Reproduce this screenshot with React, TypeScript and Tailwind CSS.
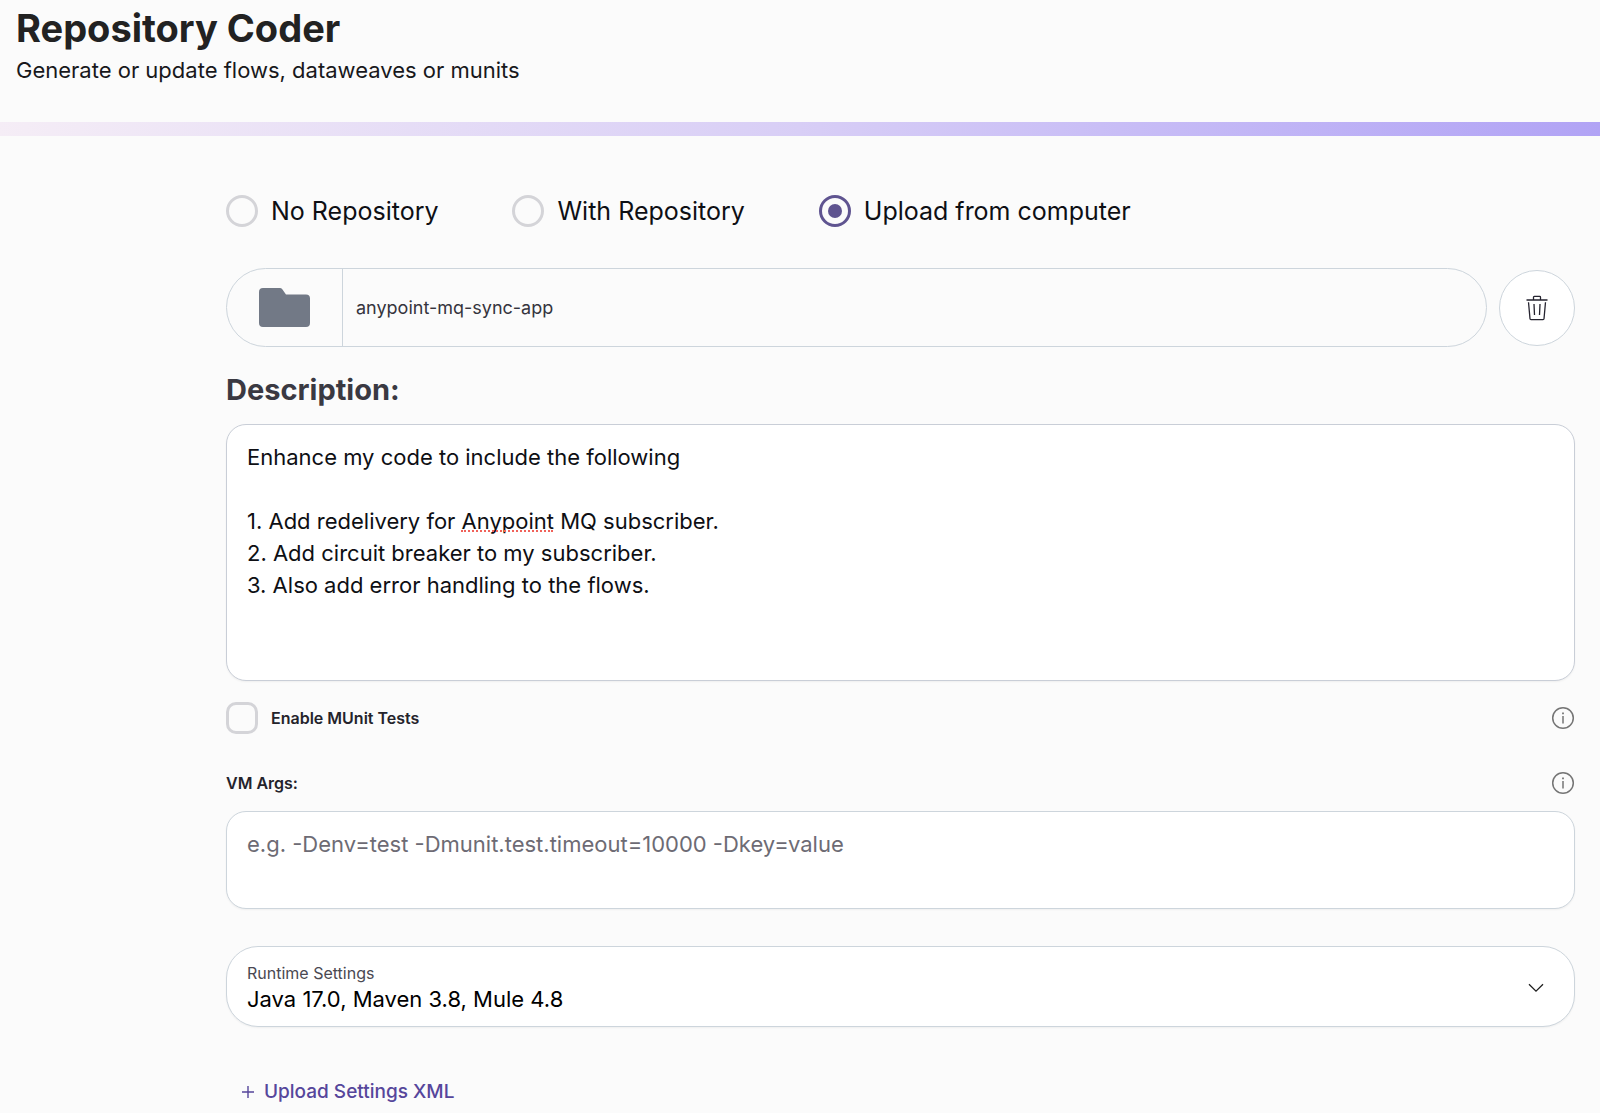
import { useState } from 'react';

const SOURCES = [
  { id: 'none', label: 'No Repository' },
  { id: 'repo', label: 'With Repository' },
  { id: 'upload', label: 'Upload from computer' },
];

const RUNTIMES = ['Java 17.0, Maven 3.8, Mule 4.8', 'Java 8.0, Maven 3.8, Mule 4.4'];

const DEFAULT_DESCRIPTION = `Enhance my code to include the following

1. Add redelivery for Anypoint MQ subscriber.
2. Add circuit breaker to my subscriber.
3. Also add error handling to the flows.`;

function FolderIcon() {
  return (
    <svg className="w-[51px] h-[39px]" viewBox="0 0 51 39" fill="#727986" aria-hidden="true">
      <path d="M4 0h17a3 3 0 0 1 2.1.9L27 6.5h20a4 4 0 0 1 4 4V35a4 4 0 0 1-4 4H4a4 4 0 0 1-4-4V4a4 4 0 0 1 4-4z" />
    </svg>
  );
}

function TrashIcon() {
  return (
    <svg className="w-[22px] h-[26px]" viewBox="0 0 22 26" fill="none" stroke="#25232f" strokeWidth="1.3" aria-hidden="true">
      <path d="M.5 5h21M7.5 5V2.2a.8.8 0 0 1 .8-.8h5.4a.8.8 0 0 1 .8.8V5" />
      <path d="M2.5 7.2 4 23.7a1 1 0 0 0 1 .9h12a1 1 0 0 0 1-.9l1.5-16.5" />
      <path d="m8 9 .5 11M14 9l-.5 11" />
    </svg>
  );
}

function InfoButton({ label }: { label: string }) {
  return (
    <button type="button" aria-label={label} className="shrink-0">
      <svg className="size-6 block" viewBox="0 0 24 24" fill="none" stroke="#757575" aria-hidden="true">
        <circle cx="12" cy="12" r="10.3" strokeWidth="1.5" />
        <path d="M12 10v7.5" strokeWidth="1.5" />
        <path d="M12 6.5v1.8" strokeWidth="1.8" />
      </svg>
    </button>
  );
}

export default function App() {
  const [source, setSource] = useState('upload');
  const [description, setDescription] = useState(DEFAULT_DESCRIPTION);
  const [munit, setMunit] = useState(false);
  const [vmArgs, setVmArgs] = useState('');
  const [runtime, setRuntime] = useState(RUNTIMES[0]);

  return (
    <div className="min-h-screen bg-[#fbfbfb] font-[Inter,sans-serif] text-[#0e0f14]">
      <header className="h-[122px] px-4 pt-1">
        <h1 className="text-[38px] leading-12 font-bold text-[#222222]">Repository Coder</h1>
        <p className="text-[22px] leading-9 text-[#18181b]">Generate or update flows, dataweaves or munits</p>
      </header>
      <div className="h-3.5 bg-linear-to-r from-[#f5edf6] via-[#d8cef6] to-[#b1a3f5]" />

      <form className="pl-[226px] pr-[25px] pt-[59px]" onSubmit={(e) => e.preventDefault()}>
        <div role="radiogroup" aria-label="Source" className="flex items-center gap-[74px]">
          {SOURCES.map((item) => (
            <label key={item.id} className="flex items-center gap-[13px] text-[25px] leading-8">
              <input
                type="radio"
                name="source"
                checked={source === item.id}
                onChange={() => setSource(item.id)}
                className="appearance-none size-8 shrink-0 grid place-content-center rounded-full border-3 border-[#d4d4d8] checked:border-[#5f5490] checked:before:size-3.5 checked:before:rounded-full checked:before:bg-[#5f5490]"
              />
              {item.label}
            </label>
          ))}
        </div>

        <div className="flex items-center gap-3 mt-[41px]">
          <div className="flex-1 flex h-[79px] rounded-full border border-[#cdd5dc] overflow-hidden">
            <button
              type="button"
              aria-label="Choose folder"
              className="w-[116px] flex items-center justify-center border-r border-[#cdd5dc]"
            >
              <FolderIcon />
            </button>
            <span className="flex items-center px-[13px] text-lg text-[#35343d]">anypoint-mq-sync-app</span>
          </div>
          <button
            type="button"
            aria-label="Remove folder"
            className="size-[76px] flex items-center justify-center rounded-full border border-[#cdd5dc] bg-white"
          >
            <TrashIcon />
          </button>
        </div>

        <label htmlFor="description" className="block mt-[25px] text-[29px] leading-9 font-bold text-[#3a3942]">
          Description:
        </label>
        <div className="relative mt-4">
          <textarea
            id="description"
            value={description}
            spellCheck={false}
            onChange={(e) => setDescription(e.target.value)}
            className="block w-full h-[257px] resize-none rounded-[20px] border border-[#c9ced7] bg-white px-5 py-4 text-[22px] leading-8 shadow-xs outline-none"
          />
          {description === DEFAULT_DESCRIPTION && (
            <span
              aria-hidden="true"
              className="absolute left-[235px] top-[106px] w-[92px] border-b-2 border-dotted border-[#f0625a] pointer-events-none"
            />
          )}
        </div>

        <div className="flex items-center justify-between mt-[21px]">
          <label className="flex items-center gap-[13px] text-base font-semibold text-[#24232b]">
            <input
              type="checkbox"
              checked={munit}
              onChange={(e) => setMunit(e.target.checked)}
              className="appearance-none size-8 rounded-[10px] border-3 border-[#d4d4d8] checked:bg-[#5f5490] checked:border-[#5f5490]"
            />
            Enable MUnit Tests
          </label>
          <InfoButton label="About MUnit tests" />
        </div>

        <div className="flex items-center justify-between mt-[37px]">
          <label htmlFor="vm-args" className="text-base font-semibold text-[#24232b]">
            VM Args:
          </label>
          <InfoButton label="About VM args" />
        </div>
        <textarea
          id="vm-args"
          value={vmArgs}
          onChange={(e) => setVmArgs(e.target.value)}
          placeholder="e.g. -Denv=test -Dmunit.test.timeout=10000 -Dkey=value"
          className="block w-full h-[98px] mt-4 resize-none rounded-[20px] border border-[#cdd5dc] bg-white px-5 py-4 text-[22px] leading-8 shadow-xs outline-none placeholder:text-[#6d6b74]"
        />

        <div className="relative mt-[37px] h-[81px] rounded-[32px] border border-[#cdd5dc] bg-white px-5 pt-4 shadow-xs">
          <label htmlFor="runtime" className="block text-base leading-5 text-[#4a4952]">
            Runtime Settings
          </label>
          <select
            id="runtime"
            value={runtime}
            onChange={(e) => setRuntime(e.target.value)}
            className="block w-full appearance-none bg-transparent text-[22px] leading-8 text-black outline-none"
          >
            {RUNTIMES.map((name) => (
              <option key={name}>{name}</option>
            ))}
          </select>
          <svg
            className="absolute right-[30px] top-9 w-4 h-2.5 pointer-events-none"
            viewBox="0 0 16 10"
            fill="none"
            stroke="#1f1f1f"
            strokeWidth="1.3"
            aria-hidden="true"
          >
            <path d="M1 1.2l7 7 7-7" />
          </svg>
        </div>

        <button
          type="button"
          className="flex items-center gap-2.5 mt-[49px] ml-4 text-[19px] leading-8 font-medium text-[#56469b]"
        >
          <svg className="size-3" viewBox="0 0 12 12" fill="none" stroke="currentColor" strokeWidth="1.4" aria-hidden="true">
            <path d="M6 0v12M0 6h12" />
          </svg>
          Upload Settings XML
        </button>
      </form>
    </div>
  );
}
